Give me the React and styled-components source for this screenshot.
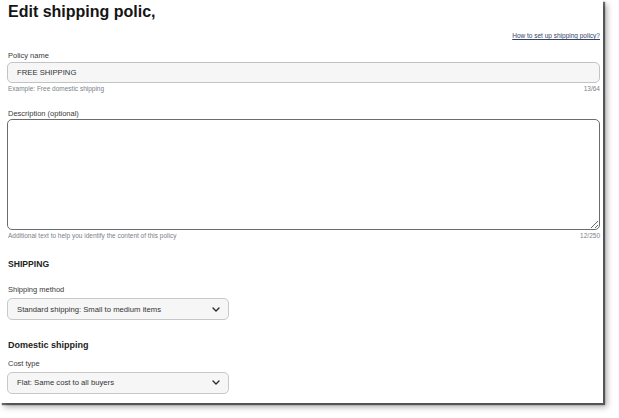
import styled, { createGlobalStyle } from 'styled-components';

const Global = createGlobalStyle`
	html, body {
		margin: 0;
		padding: 0;
		background: #fff;
	}
	body {
		font-family: "Liberation Sans", Arial, sans-serif;
		color: #333;
	}
`;

const Page = styled.div`
	min-height: 418px;
	box-sizing: border-box;
	padding-bottom: 15px;
	background: #fff;
`;

const Panel = styled.div`
	width: 603px;
	height: 403px;
	box-sizing: border-box;
	padding: 2px 3px 0 7px;
	background: #fff;
	overflow: hidden;
	box-shadow: 2px 2px 1px rgba(0, 0, 0, 0.55), 4px 4px 6px rgba(0, 0, 0, 0.32);
`;

const Title = styled.h1`
	margin: 0 0 0 1px;
	font-size: 16px;
	line-height: 20px;
	font-weight: 700;
	color: #151515;
`;

const HelpRow = styled.div`
	margin-top: 10px;
	text-align: right;
	font-size: 6.5px;
	line-height: 8px;
`;

const HelpLink = styled.a`
	color: #34426a;
	text-decoration: underline;
`;

const Label = styled.div`
	margin-top: ${p => p.$top}px;
	margin-left: 1px;
	font-size: 7.5px;
	line-height: 9px;
	color: #3a3a3a;
`;

const TextInput = styled.input`
	display: block;
	box-sizing: border-box;
	width: 100%;
	height: 21px;
	margin: 2.5px 0 0;
	padding: 0 9px;
	border: 1px solid #c3c3c3;
	border-radius: 5px;
	background: #f6f6f6;
	font-family: inherit;
	font-size: 7.7px;
	color: #333;
	outline: none;
`;

const TextArea = styled.textarea`
	display: block;
	box-sizing: border-box;
	width: 100%;
	height: 111px;
	margin: 1.5px 0 0;
	padding: 6px 9px;
	border: 1.5px solid #6c6c6c;
	border-radius: 5px;
	background: #fff;
	font-family: inherit;
	font-size: 7.7px;
	outline: none;
`;

const Hint = styled.div`
	display: flex;
	justify-content: space-between;
	margin-top: 2px;
	margin-left: 1px;
	font-size: 6.5px;
	line-height: 8px;
	color: #7a7f88;
`;

const SectionTitle = styled.h2`
	margin: ${p => p.$top}px 0 0 1px;
	font-size: ${p => p.$size}px;
	line-height: 12px;
	font-weight: 700;
	color: #222;
`;

const Select = styled.div`
	display: flex;
	align-items: center;
	justify-content: space-between;
	box-sizing: border-box;
	width: 222px;
	height: 22px;
	margin-top: 4px;
	padding: 0 8px 0 9px;
	border: 1px solid #c8c8c8;
	border-radius: 5px;
	background: #f6f6f6;
	font-size: 7.7px;
	color: #333;
`;

const Chevron = () => (
	<svg width="8" height="5" viewBox="0 0 8 5" aria-hidden="true">
		<polyline points="1,1 4,4 7,1" fill="none" stroke="#2a2a2a" strokeWidth="1.4" strokeLinecap="round" strokeLinejoin="round" />
	</svg>
);

export default function App() {
	return (
		<Page>
			<Global />
			<Panel>
				<Title>Edit shipping polic,</Title>
				<HelpRow>
					<HelpLink href="#">How to set up shipping policy?</HelpLink>
				</HelpRow>

				<Label $top={10.5}>Policy name</Label>
				<TextInput defaultValue="FREE SHIPPING" />
				<Hint>
					<span>Example: Free domestic shipping</span>
					<span>13/64</span>
				</Hint>

				<Label $top={15.5}>Description (optional)</Label>
				<TextArea />
				<Hint>
					<span>Additional text to help you identify the content of this policy</span>
					<span>12/250</span>
				</Hint>

				<SectionTitle $top={18} $size={8.6}>SHIPPING</SectionTitle>
				<Label $top={15}>Shipping method</Label>
				<Select>
					<span>Standard shipping: Small to medium items</span>
					<Chevron />
				</Select>

				<SectionTitle $top={19} $size={9}>Domestic shipping</SectionTitle>
				<Label $top={7.5}>Cost type</Label>
				<Select>
					<span>Flat: Same cost to all buyers</span>
					<Chevron />
				</Select>
			</Panel>
		</Page>
	);
}
